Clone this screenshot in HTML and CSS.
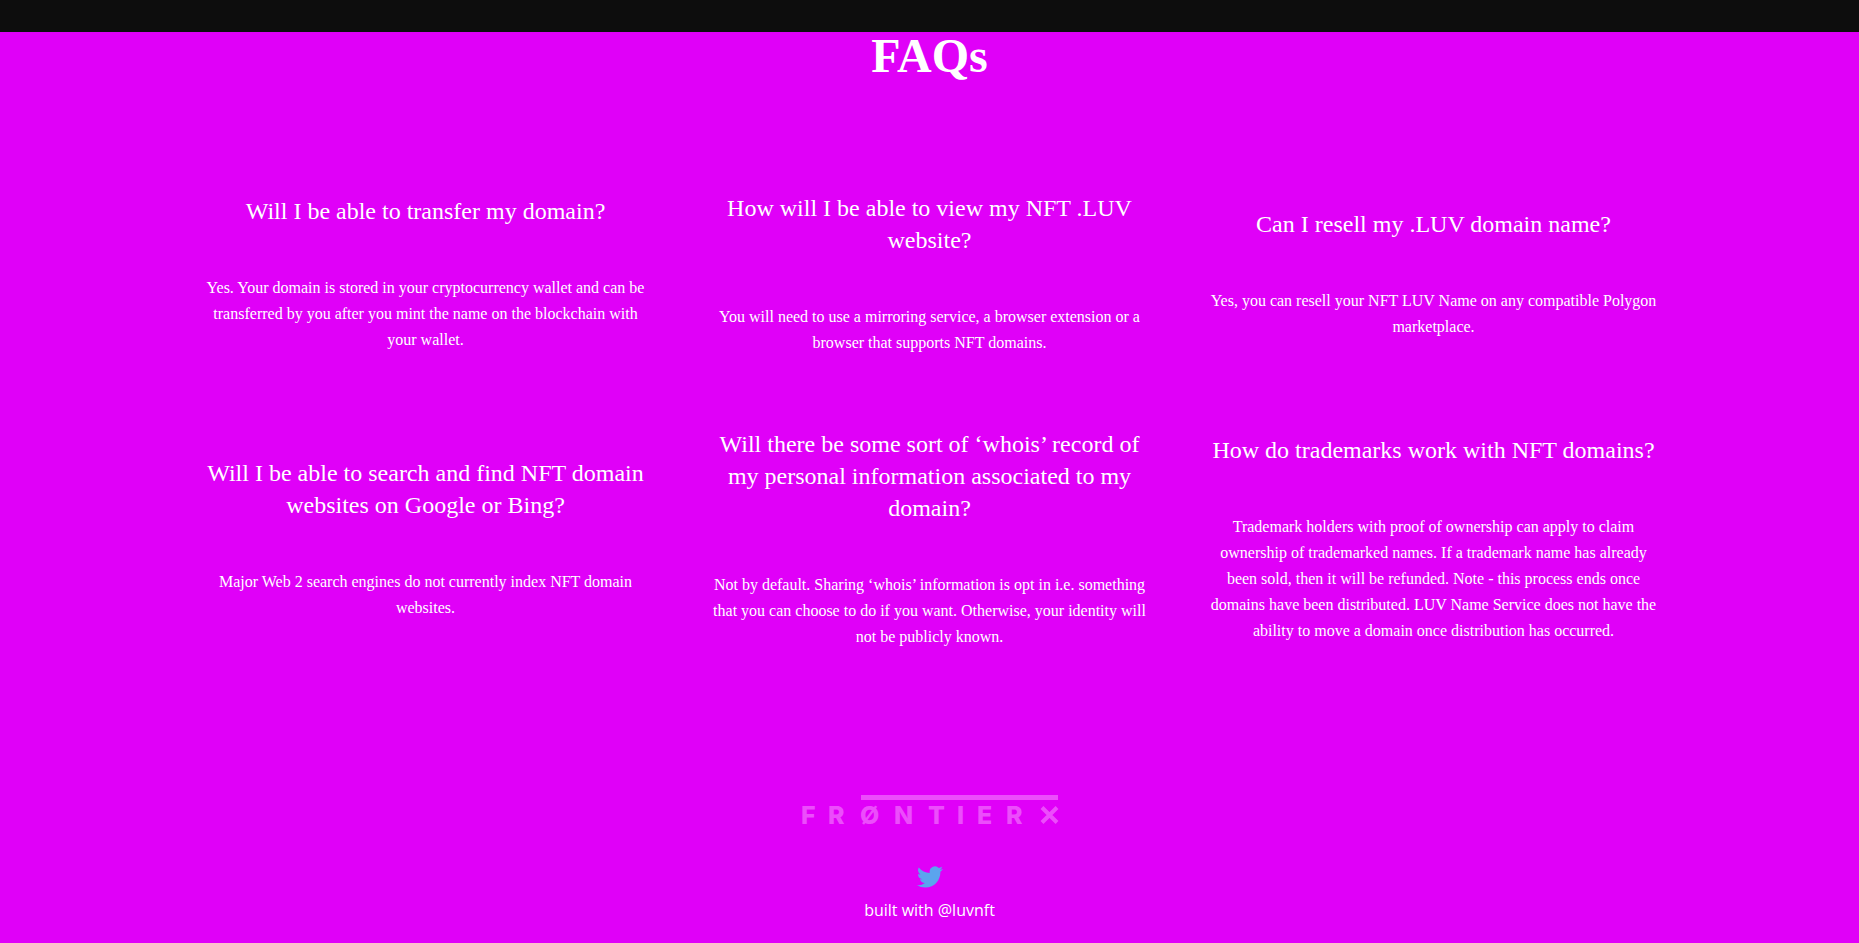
FILE: index.html
```html
<!DOCTYPE html>
<html lang="en">
<head>
<meta charset="utf-8">
<title>FAQs</title>
<link rel="stylesheet" href="styles.css">
</head>
<body>
<div class="topbar"></div>
<main class="faqs">
  <h1 class="title">FAQs</h1>
  <div class="grid">
    <section class="item">
      <h2 class="question">Will I be able to transfer my domain?</h2>
      <p class="answer">Yes. Your domain is stored in your cryptocurrency wallet and can be transferred by you after you mint the name on the blockchain with your wallet.</p>
    </section>
    <section class="item">
      <h2 class="question">How will I be able to view my NFT .LUV website?</h2>
      <p class="answer">You will need to use a mirroring service, a browser extension or a browser that supports NFT domains.</p>
    </section>
    <section class="item">
      <h2 class="question">Can I resell my .LUV domain name?</h2>
      <p class="answer">Yes, you can resell your NFT LUV Name on any compatible Polygon marketplace.</p>
    </section>
    <section class="item">
      <h2 class="question">Will I be able to search and find NFT domain websites on Google or Bing?</h2>
      <p class="answer">Major Web 2 search engines do not currently index NFT domain websites.</p>
    </section>
    <section class="item">
      <h2 class="question">Will there be some sort of ‘whois’ record of my personal information associated to my domain?</h2>
      <p class="answer">Not by default. Sharing ‘whois’ information is opt in i.e. something that you can choose to do if you want. Otherwise, your identity will not be publicly known.</p>
    </section>
    <section class="item">
      <h2 class="question">How do trademarks work with NFT domains?</h2>
      <p class="answer">Trademark holders with proof of ownership can apply to claim ownership of trademarked names. If a trademark name has already been sold, then it will be refunded. Note - this process ends once domains have been distributed. LUV Name Service does not have the ability to move a domain once distribution has occurred.</p>
    </section>
  </div>
</main>
<footer class="footer">
  <svg class="logo" width="258" height="32" viewBox="0 0 258 32" role="img" aria-label="FrontierX">
    <rect x="60" y="1" width="197" height="5"/>
    <text class="logo-text" x="0 27 59 93 127 156 176 205" y="30">FRØNTIER</text>
    <path class="logo-x" d="M241 13.500l15 15M256 13.500l-15 15"/>
  </svg>
  <a class="twitter" href="#" aria-label="Twitter">
    <svg width="26" height="22" viewBox="0 0 24 20"><path d="M23.953 2.570a10 10 0 01-2.825.775 4.958 4.958 0 002.163-2.723c-.951.555-2.005.959-3.127 1.184a4.920 4.920 0 00-8.384 4.482C7.690 6.095 4.067 4.130 1.640 1.162a4.822 4.822 0 00-.666 2.475c0 1.710.870 3.213 2.188 4.096a4.904 4.904 0 01-2.228-.616v.060a4.923 4.923 0 003.946 4.827 4.996 4.996 0 01-2.212.085 4.936 4.936 0 004.604 3.417 9.867 9.867 0 01-6.102 2.105c-.390 0-.779-.023-1.170-.067a13.995 13.995 0 007.557 2.209c9.053 0 13.998-7.496 13.998-13.985 0-.210 0-.420-.015-.630A9.935 9.935 0 0024 2.590z"/></svg>
  </a>
  <a class="credit" href="#">built with @luvnft</a>
</footer>
</body>
</html>
```
FILE: styles.css
```css
* { box-sizing: border-box; }
body {
  margin: 0;
  min-height: 100vh;
  background: #e000f8;
  color: #fff;
  font-family: "Liberation Serif", serif;
  text-align: center;
}
.topbar { height: 32px; background: #0d0d0d; }
.faqs { padding: 0 24px; }
.title { margin: 0; font-size: 48px; line-height: 48px; }
.grid {
  display: grid;
  grid-template-columns: repeat(3, 1fr);
  align-items: center;
  row-gap: 72px;
  max-width: 1512px;
  margin: 112px auto 0;
}
.item { padding: 0 28px; }
.question { margin: 0 0 48px; font-size: 24px; line-height: 32px; font-weight: 400; }
.answer { margin: 0; font-size: 16px; line-height: 26px; }
.footer {
  display: flex;
  flex-direction: column;
  align-items: center;
  margin-top: 144px;
}
.logo { fill: #ec4dfb; overflow: visible; }
.logo-text { font: 800 25px "Inter", sans-serif; }
.logo-x { stroke: #ec4dfb; stroke-width: 4; }
.twitter { margin-top: 40px; height: 22px; }
.twitter svg { display: block; fill: #5ba4ee; }
.credit {
  margin-top: 10px;
  color: #fff;
  font: 16px/24px "Open Sans", sans-serif;
  text-decoration: none;
}
```
